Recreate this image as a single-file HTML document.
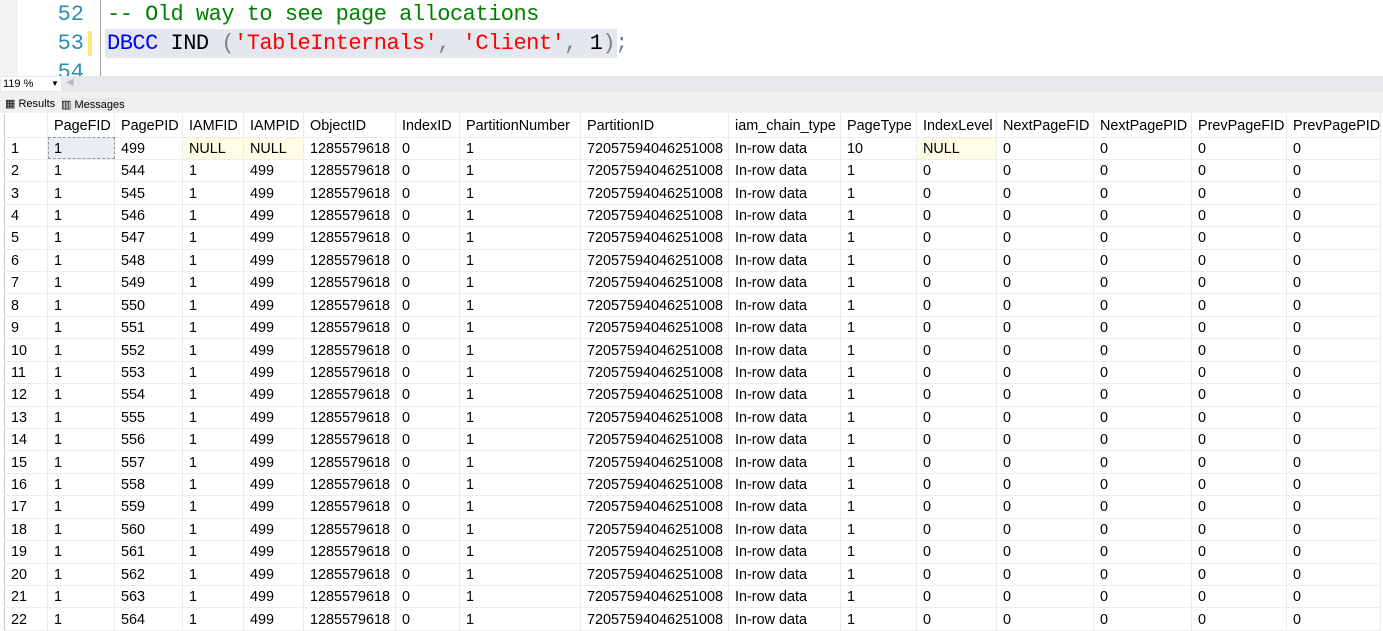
<!DOCTYPE html>
<html><head><meta charset="utf-8"><style>
*{margin:0;padding:0;box-sizing:border-box}
body{width:1383px;height:631px;overflow:hidden;background:#fff;position:relative;font-family:"Liberation Sans",sans-serif}
.ed{position:absolute;left:0;top:0;width:1383px;height:76px;background:#fff;overflow:hidden}
.gut{position:absolute;left:0;top:0;width:18px;height:76px;background:#f3f3f3}
.ln{position:absolute;left:30px;width:54px;text-align:right;color:#2b91af;font:22px "Liberation Mono",monospace}
.code{position:absolute;left:107px;font:22px "Liberation Mono",monospace;white-space:pre;letter-spacing:-0.5px}
.vl{position:absolute;left:100px;top:0;width:1px;height:76px;background:#a0a0a0}
.sel{position:absolute;left:105px;top:29px;width:512px;height:29px;background:#e3e8ef}
.yb{position:absolute;left:88px;top:31px;width:4px;height:25px;background:#fde870}
.bar{position:absolute;left:0;top:76px;width:1383px;height:16px;background:#e7e7ec}
.zoom{position:absolute;left:1px;top:1px;width:60px;height:14px;background:#fff;font-size:11px;line-height:14px;padding-left:2px;color:#000}
.tabs{position:absolute;left:0;top:92px;width:1383px;height:21px;background:#f0f0f0;font-size:11px}
table{position:absolute;left:4px;top:114px;border-collapse:collapse;table-layout:fixed;font-size:14.4px;color:#000}
td{border-right:1px solid #ececec;border-bottom:1px solid #ececec;padding-left:6px;padding-top:1px;white-space:nowrap;overflow:hidden;height:22.43px;line-height:20px}
tr.h td{height:23px}
td:first-child{border-left:1px solid #c8c8c8}
.y{background:#fefde6}
.f{background:#e9eef3;outline:1px dashed #999;outline-offset:-1px}
</style></head><body>
<div class="ed">
<div class="gut"></div>
<div class="ln" style="top:2px">52</div>
<div class="ln" style="top:31px">53</div>
<div class="ln" style="top:60px">54</div>
<div class="yb"></div>
<div class="vl"></div>
<div class="sel"></div>
<div class="code" style="top:2px;color:#008000">-- Old way to see page allocations</div>
<div class="code" style="top:31px"><span style="color:#0000ff">DBCC</span> IND <span style="color:#808080">(</span><span style="color:#ff0000">'TableInternals'</span><span style="color:#808080">,</span> <span style="color:#ff0000">'Client'</span><span style="color:#808080">,</span> 1<span style="color:#808080">);</span></div>
</div>
<div class="bar"><div class="zoom">119 % <span style="position:absolute;left:50px;font-size:8px">▼</span></div><span style="position:absolute;left:66px;top:1px;font-size:10px;color:#bbb">◀</span></div>
<div class="tabs">
<span style="position:absolute;left:5px;top:5px">▦ Results</span>
<span style="position:absolute;left:61px;top:6px;background:#e8e8e8">▥ Messages</span>
</div>
<table>
<colgroup><col style="width:43px"><col style="width:67px"><col style="width:68px"><col style="width:61px"><col style="width:60px"><col style="width:92px"><col style="width:64px"><col style="width:121px"><col style="width:148px"><col style="width:112px"><col style="width:76px"><col style="width:80px"><col style="width:97px"><col style="width:98px"><col style="width:95px"><col style="width:93px"></colgroup>
<tr class="h"><td></td><td>PageFID</td><td>PagePID</td><td>IAMFID</td><td>IAMPID</td><td>ObjectID</td><td>IndexID</td><td>PartitionNumber</td><td>PartitionID</td><td>iam_chain_type</td><td>PageType</td><td>IndexLevel</td><td>NextPageFID</td><td>NextPagePID</td><td>PrevPageFID</td><td>PrevPagePID</td></tr>
<tr><td>1</td><td class="f">1</td><td>499</td><td class="y">NULL</td><td class="y">NULL</td><td>1285579618</td><td>0</td><td>1</td><td>72057594046251008</td><td>In-row data</td><td>10</td><td class="y">NULL</td><td>0</td><td>0</td><td>0</td><td>0</td></tr>
<tr><td>2</td><td>1</td><td>544</td><td>1</td><td>499</td><td>1285579618</td><td>0</td><td>1</td><td>72057594046251008</td><td>In-row data</td><td>1</td><td>0</td><td>0</td><td>0</td><td>0</td><td>0</td></tr>
<tr><td>3</td><td>1</td><td>545</td><td>1</td><td>499</td><td>1285579618</td><td>0</td><td>1</td><td>72057594046251008</td><td>In-row data</td><td>1</td><td>0</td><td>0</td><td>0</td><td>0</td><td>0</td></tr>
<tr><td>4</td><td>1</td><td>546</td><td>1</td><td>499</td><td>1285579618</td><td>0</td><td>1</td><td>72057594046251008</td><td>In-row data</td><td>1</td><td>0</td><td>0</td><td>0</td><td>0</td><td>0</td></tr>
<tr><td>5</td><td>1</td><td>547</td><td>1</td><td>499</td><td>1285579618</td><td>0</td><td>1</td><td>72057594046251008</td><td>In-row data</td><td>1</td><td>0</td><td>0</td><td>0</td><td>0</td><td>0</td></tr>
<tr><td>6</td><td>1</td><td>548</td><td>1</td><td>499</td><td>1285579618</td><td>0</td><td>1</td><td>72057594046251008</td><td>In-row data</td><td>1</td><td>0</td><td>0</td><td>0</td><td>0</td><td>0</td></tr>
<tr><td>7</td><td>1</td><td>549</td><td>1</td><td>499</td><td>1285579618</td><td>0</td><td>1</td><td>72057594046251008</td><td>In-row data</td><td>1</td><td>0</td><td>0</td><td>0</td><td>0</td><td>0</td></tr>
<tr><td>8</td><td>1</td><td>550</td><td>1</td><td>499</td><td>1285579618</td><td>0</td><td>1</td><td>72057594046251008</td><td>In-row data</td><td>1</td><td>0</td><td>0</td><td>0</td><td>0</td><td>0</td></tr>
<tr><td>9</td><td>1</td><td>551</td><td>1</td><td>499</td><td>1285579618</td><td>0</td><td>1</td><td>72057594046251008</td><td>In-row data</td><td>1</td><td>0</td><td>0</td><td>0</td><td>0</td><td>0</td></tr>
<tr><td>10</td><td>1</td><td>552</td><td>1</td><td>499</td><td>1285579618</td><td>0</td><td>1</td><td>72057594046251008</td><td>In-row data</td><td>1</td><td>0</td><td>0</td><td>0</td><td>0</td><td>0</td></tr>
<tr><td>11</td><td>1</td><td>553</td><td>1</td><td>499</td><td>1285579618</td><td>0</td><td>1</td><td>72057594046251008</td><td>In-row data</td><td>1</td><td>0</td><td>0</td><td>0</td><td>0</td><td>0</td></tr>
<tr><td>12</td><td>1</td><td>554</td><td>1</td><td>499</td><td>1285579618</td><td>0</td><td>1</td><td>72057594046251008</td><td>In-row data</td><td>1</td><td>0</td><td>0</td><td>0</td><td>0</td><td>0</td></tr>
<tr><td>13</td><td>1</td><td>555</td><td>1</td><td>499</td><td>1285579618</td><td>0</td><td>1</td><td>72057594046251008</td><td>In-row data</td><td>1</td><td>0</td><td>0</td><td>0</td><td>0</td><td>0</td></tr>
<tr><td>14</td><td>1</td><td>556</td><td>1</td><td>499</td><td>1285579618</td><td>0</td><td>1</td><td>72057594046251008</td><td>In-row data</td><td>1</td><td>0</td><td>0</td><td>0</td><td>0</td><td>0</td></tr>
<tr><td>15</td><td>1</td><td>557</td><td>1</td><td>499</td><td>1285579618</td><td>0</td><td>1</td><td>72057594046251008</td><td>In-row data</td><td>1</td><td>0</td><td>0</td><td>0</td><td>0</td><td>0</td></tr>
<tr><td>16</td><td>1</td><td>558</td><td>1</td><td>499</td><td>1285579618</td><td>0</td><td>1</td><td>72057594046251008</td><td>In-row data</td><td>1</td><td>0</td><td>0</td><td>0</td><td>0</td><td>0</td></tr>
<tr><td>17</td><td>1</td><td>559</td><td>1</td><td>499</td><td>1285579618</td><td>0</td><td>1</td><td>72057594046251008</td><td>In-row data</td><td>1</td><td>0</td><td>0</td><td>0</td><td>0</td><td>0</td></tr>
<tr><td>18</td><td>1</td><td>560</td><td>1</td><td>499</td><td>1285579618</td><td>0</td><td>1</td><td>72057594046251008</td><td>In-row data</td><td>1</td><td>0</td><td>0</td><td>0</td><td>0</td><td>0</td></tr>
<tr><td>19</td><td>1</td><td>561</td><td>1</td><td>499</td><td>1285579618</td><td>0</td><td>1</td><td>72057594046251008</td><td>In-row data</td><td>1</td><td>0</td><td>0</td><td>0</td><td>0</td><td>0</td></tr>
<tr><td>20</td><td>1</td><td>562</td><td>1</td><td>499</td><td>1285579618</td><td>0</td><td>1</td><td>72057594046251008</td><td>In-row data</td><td>1</td><td>0</td><td>0</td><td>0</td><td>0</td><td>0</td></tr>
<tr><td>21</td><td>1</td><td>563</td><td>1</td><td>499</td><td>1285579618</td><td>0</td><td>1</td><td>72057594046251008</td><td>In-row data</td><td>1</td><td>0</td><td>0</td><td>0</td><td>0</td><td>0</td></tr>
<tr><td>22</td><td>1</td><td>564</td><td>1</td><td>499</td><td>1285579618</td><td>0</td><td>1</td><td>72057594046251008</td><td>In-row data</td><td>1</td><td>0</td><td>0</td><td>0</td><td>0</td><td>0</td></tr>
</table>
</body></html>
